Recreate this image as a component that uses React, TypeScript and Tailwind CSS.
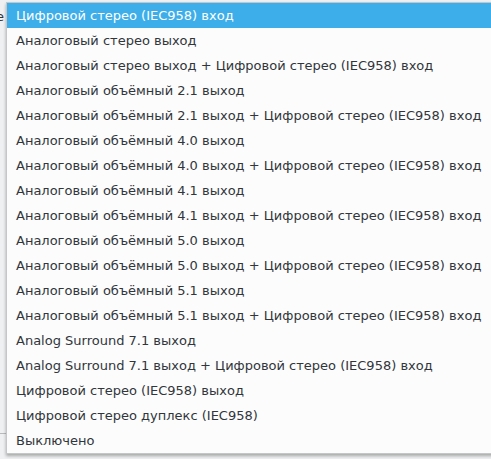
const items = [
  'Цифровой стерео (IEC958) вход',
  'Аналоговый стерео выход',
  'Аналоговый стерео выход + Цифровой стерео (IEC958) вход',
  'Аналоговый объёмный 2.1 выход',
  'Аналоговый объёмный 2.1 выход + Цифровой стерео (IEC958) вход',
  'Аналоговый объёмный 4.0 выход',
  'Аналоговый объёмный 4.0 выход + Цифровой стерео (IEC958) вход',
  'Аналоговый объёмный 4.1 выход',
  'Аналоговый объёмный 4.1 выход + Цифровой стерео (IEC958) вход',
  'Аналоговый объёмный 5.0 выход',
  'Аналоговый объёмный 5.0 выход + Цифровой стерео (IEC958) вход',
  'Аналоговый объёмный 5.1 выход',
  'Аналоговый объёмный 5.1 выход + Цифровой стерео (IEC958) вход',
  'Analog Surround 7.1 выход',
  'Analog Surround 7.1 выход + Цифровой стерео (IEC958) вход',
  'Цифровой стерео (IEC958) выход',
  'Цифровой стерео дуплекс (IEC958)',
  'Выключено',
]

export default function App() {
  return (
    <div
      className="relative w-[491px] h-[459px] overflow-hidden bg-[#eff0f1] text-[13px] text-[#31363b]"
      style={{ fontFamily: '"DejaVu Sans", sans-serif' }}
    >
      {/* the combo box label underneath, mostly hidden */}
      <span className="absolute left-[-4px] top-[7px]">e</span>
      <div className="absolute left-0 top-[433px] w-[8px] h-px bg-[#b8babc]" />

      <div className="absolute left-[6px] top-[2px] w-[500px] bg-[#fcfcfc] border border-[#c4c6c8] shadow-[0_2px_3px_rgba(0,0,0,0.3)]">
        {items.map((label, i) => (
          <div
            key={label}
            className={
              i === 0
                ? 'h-[25px] flex items-center pl-[9px] pt-[1px] bg-[#3daee9] text-white'
                : 'h-[25px] flex items-center pl-[9px] pt-[1px]'
            }
          >
            {label}
          </div>
        ))}
      </div>
    </div>
  )
}
